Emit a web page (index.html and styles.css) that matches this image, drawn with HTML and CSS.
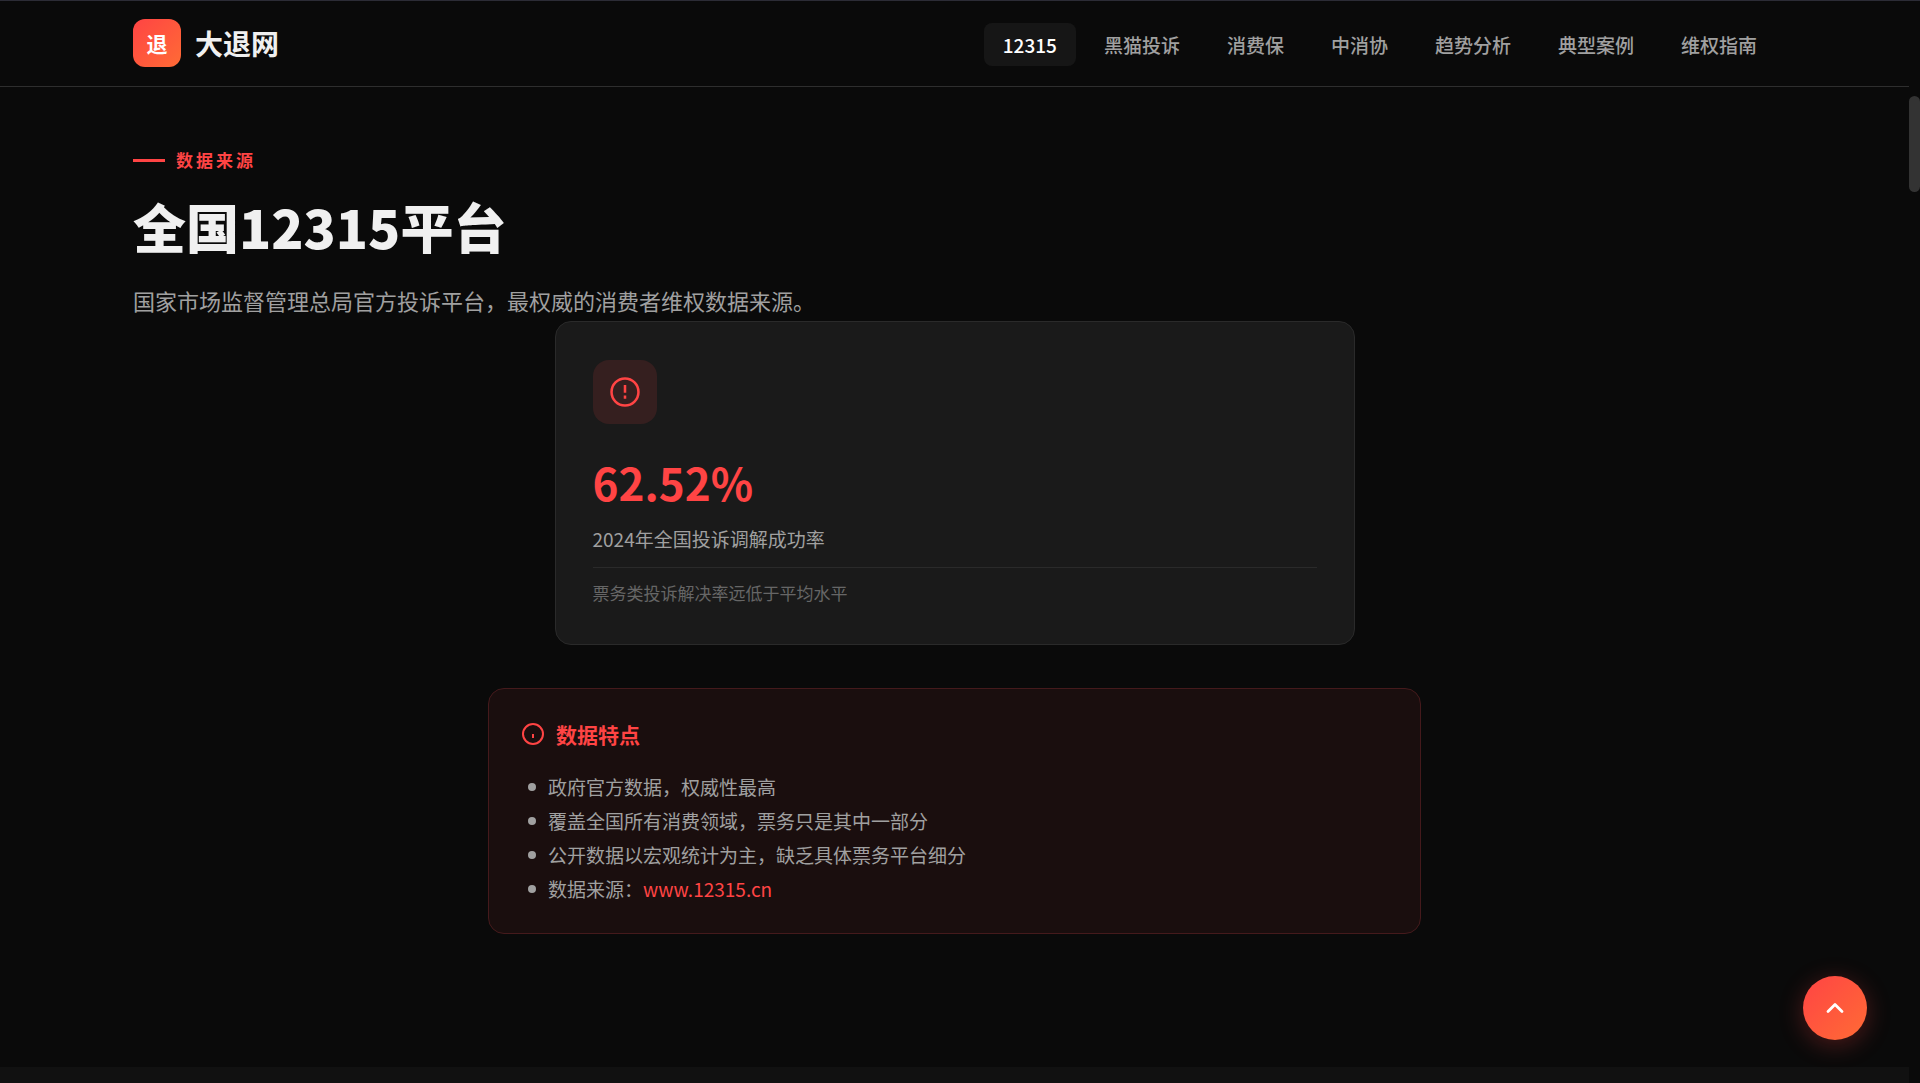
FILE: index.html
```html
<!DOCTYPE html>
<html lang="zh-CN">
<head>
<meta charset="utf-8">
<meta name="viewport" content="width=device-width, initial-scale=1">
<title>大退网 - 全国12315平台</title>
<link rel="stylesheet" href="styles.css">
</head>
<body>
<div class="page">
  <header class="header">
    <div class="container header-inner">
      <a class="brand" href="#"><span class="brand-mark">退</span><span class="brand-name">大退网</span></a>
      <nav class="nav">
        <a class="nav-link active" href="#p12315">12315</a>
        <a class="nav-link" href="#heimao">黑猫投诉</a>
        <a class="nav-link" href="#xiaofeibao">消费保</a>
        <a class="nav-link" href="#cca">中消协</a>
        <a class="nav-link" href="#trends">趋势分析</a>
        <a class="nav-link" href="#cases">典型案例</a>
        <a class="nav-link" href="#guide">维权指南</a>
      </nav>
    </div>
  </header>

  <main>
    <section class="section" id="p12315">
      <div class="container">
        <p class="eyebrow">数据来源</p>
        <h1 class="title">全国12315平台</h1>
        <p class="subtitle">国家市场监督管理总局官方投诉平台，最权威的消费者维权数据来源。</p>

        <article class="stat-card">
          <div class="stat-icon">
            <svg width="32" height="32" viewBox="0 0 24 24" fill="none" stroke="currentColor" stroke-width="1.9" aria-hidden="true"><circle cx="12" cy="12" r="10.1"/><path d="M12 6.8v5.7M12 14.6v2.4"/></svg>
          </div>
          <p class="stat-value">62.52%</p>
          <p class="stat-label">2024年全国投诉调解成功率</p>
          <p class="stat-note">票务类投诉解决率远低于平均水平</p>
        </article>

        <aside class="feature-box">
          <h2 class="feature-title">
            <svg width="24" height="24" viewBox="0 0 24 24" fill="none" stroke="currentColor" stroke-width="2" aria-hidden="true"><circle cx="12" cy="12" r="10"/><path d="M12 12v4"/></svg>
            数据特点
          </h2>
          <ul class="feature-list">
            <li>政府官方数据，权威性最高</li>
            <li>覆盖全国所有消费领域，票务只是其中一部分</li>
            <li>公开数据以宏观统计为主，缺乏具体票务平台细分</li>
            <li>数据来源：<a href="https://www.12315.cn">www.12315.cn</a></li>
          </ul>
        </aside>
      </div>
    </section>
    <section class="section-alt" id="heimao"></section>
  </main>
</div>
<div class="scroll-thumb"></div>
<button class="to-top" type="button" aria-label="返回顶部">
  <svg width="28" height="28" viewBox="0 0 24 24" fill="none" stroke="currentColor" stroke-width="2.4" stroke-linecap="round" stroke-linejoin="round" aria-hidden="true"><path d="M6 15l6-6 6 6"/></svg>
</button>
</body>
</html>
```
FILE: styles.css
```css
:root {
  --bg: #0a0a0a;
  --surface: #1a1a1a;
  --line: #2a2a2a;
  --text: #f0f0f0;
  --muted: #a0a0a0;
  --dim: #666;
  --accent: #ff4444;
  --gradient: linear-gradient(135deg, #ff4444, #ff6b35);
}

* {
  box-sizing: border-box;
  margin: 0;
  padding: 0;
}

body {
  height: 100vh;
  overflow: hidden;
  background: var(--bg);
  color: var(--text);
  font-family: "Noto Sans CJK SC", sans-serif;
  font-size: 19px;
}

body::before {
  content: "";
  display: block;
  height: 1px;
  background: #2c2c36;
}

a {
  color: inherit;
  text-decoration: none;
}

.page {
  display: flex;
  flex-direction: column;
  height: 100%;
  margin-right: 11px;
}

.container {
  width: 100%;
  max-width: 1643px;
  margin: 0 auto;
}

.header {
  flex: none;
  padding: 18px 0 19px;
  border-bottom: 1px solid #2e2e2e;
}

.header-inner,
.brand,
.nav {
  display: flex;
  align-items: center;
}

.header-inner {
  height: 48px;
  justify-content: space-between;
}

.brand {
  gap: 14px;
}

.brand-mark {
  display: grid;
  place-items: center;
  width: 48px;
  height: 48px;
  border-radius: 12px;
  background: var(--gradient);
  color: #fff;
  font-size: 21px;
  font-weight: 700;
}

.brand-name {
  font-size: 28px;
  font-weight: 700;
}

.nav {
  gap: 9px;
  padding-top: 2px;
}

.nav-link {
  padding: 8px 19px 7px;
  border-radius: 8px;
  color: var(--muted);
  font-weight: 500;
  line-height: 28px;
}

.nav-link.active {
  background: #161616;
  color: #fff;
}

main {
  display: flex;
  flex: 1;
  flex-direction: column;
}

.section {
  padding: 58px 0 133px;
}

.section-alt {
  flex: 1;
  background: #111;
}

.eyebrow {
  display: flex;
  align-items: center;
  gap: 11px;
  color: var(--accent);
  font-size: 17px;
  font-weight: 700;
  letter-spacing: 3px;
  line-height: 30px;
}

.eyebrow::before {
  content: "";
  width: 32px;
  height: 3px;
  background: var(--accent);
}

.title {
  margin-top: 18px;
  font-size: 53px;
  font-weight: 900;
  line-height: 66px;
}

.subtitle {
  margin-top: 22px;
  padding-bottom: 2px;
  color: var(--muted);
  font-size: 22px;
  line-height: 38px;
}

.stat-card {
  max-width: 800px;
  margin: 0 auto;
  padding: 38px 37px 37px;
  border: 1px solid var(--line);
  border-radius: 16px;
  background: var(--surface);
}

.stat-icon {
  display: grid;
  place-items: center;
  width: 64px;
  height: 64px;
  border-radius: 16px;
  background: #351f1f;
  color: var(--accent);
}

.stat-value {
  margin-top: 26px;
  color: var(--accent);
  font-size: 44px;
  font-weight: 700;
  line-height: 64px;
}

.stat-label {
  margin-top: 9px;
  color: var(--muted);
  line-height: 32px;
}

.stat-note {
  margin-top: 12px;
  padding-top: 11px;
  border-top: 1px solid var(--line);
  color: var(--dim);
  font-size: 17px;
  line-height: 28px;
}

.feature-box {
  max-width: 933px;
  margin: 43px auto 0;
  padding: 29px 32px 27px;
  border: 1px solid #451a1c;
  border-radius: 16px;
  background: #1a0e0e;
}

.feature-title {
  display: flex;
  align-items: center;
  gap: 11px;
  color: var(--accent);
  font-size: 21px;
  font-weight: 700;
  line-height: 32px;
}

.feature-list {
  margin-top: 20px;
  padding-left: 7px;
  color: var(--muted);
  line-height: 34px;
  list-style: none;
}

.feature-list li {
  display: flex;
  align-items: center;
}

.feature-list li::before {
  content: "";
  width: 8px;
  height: 8px;
  margin-right: 12px;
  border-radius: 50%;
  background: currentColor;
}

.feature-list a {
  color: var(--accent);
}

.scroll-thumb {
  position: absolute;
  top: 96px;
  right: 0;
  width: 11px;
  height: 96px;
  border-radius: 6px;
  background: #333;
}

.to-top {
  position: fixed;
  right: 53px;
  bottom: 43px;
  display: grid;
  place-items: center;
  width: 64px;
  height: 64px;
  border: 0;
  border-radius: 50%;
  background: var(--gradient);
  box-shadow: 0 5px 24px rgba(255, 68, 68, 0.28);
  color: #fff;
}
```
